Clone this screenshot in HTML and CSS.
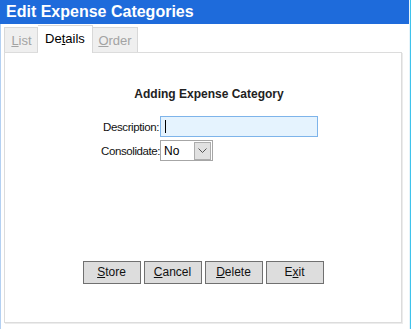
FILE: index.html
```html
<!DOCTYPE html>
<html>
<head>
<meta charset="utf-8">
<link rel="stylesheet" href="styles.css">
</head>
<body>
<div class="window">
  <div class="main">
    <div class="titlebar">Edit Expense Categories</div>
    <div class="content">
      <div class="tabs">
        <div class="tab tab-list"><u>L</u>ist</div>
        <div class="tab tab-active">De<u>t</u>ails</div>
        <div class="tab tab-order"><u>O</u>rder</div>
      </div>
      <div class="panel">
        <div class="heading">Adding Expense Category</div>
        <div class="form">
          <div class="row">
            <div class="label">Description:</div>
            <div class="textbox"><span class="caret"></span></div>
          </div>
          <div class="row">
            <div class="label">Consolidate:</div>
            <div class="select">
              <span class="select-value">No</span>
              <span class="select-btn">
                <svg width="9" height="5" viewBox="0 0 9 5"><path d="M0.5 0.5 L4.5 4.5 L8.5 0.5" fill="none" stroke="#555" stroke-width="1"/></svg>
              </span>
            </div>
          </div>
        </div>
        <div class="buttons">
          <div class="btn"><u>S</u>tore</div>
          <div class="btn"><u>C</u>ancel</div>
          <div class="btn"><u>D</u>elete</div>
          <div class="btn">E<u>x</u>it</div>
        </div>
      </div>
    </div>
  </div>
  <div class="edge"></div>
</div>
</body>
</html>
```

FILE: styles.css
```css
html, body {
  margin: 0;
  padding: 0;
  background: #ffffff;
}
body {
  font-family: "Liberation Sans", Arial, sans-serif;
}
.window {
  width: 411px;
  height: 329px;
  display: flex;
  overflow: hidden;
}
.main {
  width: 409px;
  display: flex;
  flex-direction: column;
}
.edge {
  width: 1px;
  border-left: 1px solid #e6f4fa;
  background: #3ec3ec;
}
.titlebar {
  height: 24px;
  line-height: 24px;
  background: #1e6bdb;
  color: #ffffff;
  font-weight: bold;
  font-size: 16px;
  padding-left: 6px;
  white-space: nowrap;
}
.content {
  flex: 1;
  border-left: 1px solid #b3d0f2;
  padding-left: 3px;
  display: flex;
  flex-direction: column;
}
.tabs {
  display: flex;
  align-items: flex-end;
  height: 28px;
  margin-top: 1px;
  position: relative;
  z-index: 1;
  margin-bottom: -1px;
}
.tab {
  box-sizing: border-box;
  font-size: 13px;
  color: #a3a3a3;
  background: #efefef;
  border: 1px solid #d8d8d8;
  border-bottom: none;
  height: 25px;
  line-height: 25px;
  text-align: center;
  margin-bottom: 1px;
}
.tab u {
  text-decoration-thickness: 1px;
}
.tab-list {
  width: 34px;
  padding-left: 1px;
}
.tab-active {
  width: 55px;
  height: 28px;
  line-height: 26px;
  margin-bottom: 0;
  color: #000000;
  background: #ffffff;
  border-left: none;
  border-right: 1px solid #d8d8d8;
  border-top: 1px solid #d8d8d8;
}
.tab-order {
  width: 45px;
  border-left: none;
}
.panel {
  width: 398px;
  height: 271px;
  box-sizing: border-box;
  border: 1px solid #dcdcdc;
  box-shadow: 1px 1px 0 #ececec;
  display: flex;
  flex-direction: column;
  align-items: center;
}
.heading {
  margin-top: 34px;
  font-size: 12px;
  font-weight: bold;
  line-height: 14px;
  color: #222222;
  padding-left: 12px;
}
.form {
  margin-top: 15px;
  display: flex;
  flex-direction: column;
  gap: 3px;
  align-self: flex-start;
  margin-left: 96px;
}
.row {
  display: flex;
  align-items: center;
  height: 21px;
}
.label {
  width: 58px;
  text-align: right;
  font-size: 11.5px;
  letter-spacing: -0.4px;
  color: #111111;
  padding-right: 1px;
  white-space: nowrap;
}
.textbox {
  box-sizing: border-box;
  width: 158px;
  height: 21px;
  background: #e5f3fe;
  border: 1px solid #7eb4ea;
  padding-left: 4px;
  display: flex;
  align-items: center;
}
.caret {
  width: 1px;
  height: 13px;
  background: #000000;
}
.select {
  box-sizing: border-box;
  width: 53px;
  height: 21px;
  border: 1px solid #a6a6a6;
  display: flex;
  align-items: center;
  justify-content: space-between;
  padding: 1px 1px 1px 3px;
}
.select-value {
  font-size: 12px;
  color: #000000;
}
.select-btn {
  box-sizing: border-box;
  width: 17px;
  height: 18px;
  background: #e1e1e1;
  border: 1px solid #adadad;
  display: flex;
  align-items: center;
  justify-content: center;
}
.buttons {
  margin-top: 100px;
  display: flex;
  gap: 3px;
}
.btn {
  box-sizing: border-box;
  width: 58px;
  height: 23px;
  line-height: 21px;
  background: #dddddd;
  border: 1px solid #707070;
  text-align: center;
  font-size: 12px;
  color: #111111;
}
```
